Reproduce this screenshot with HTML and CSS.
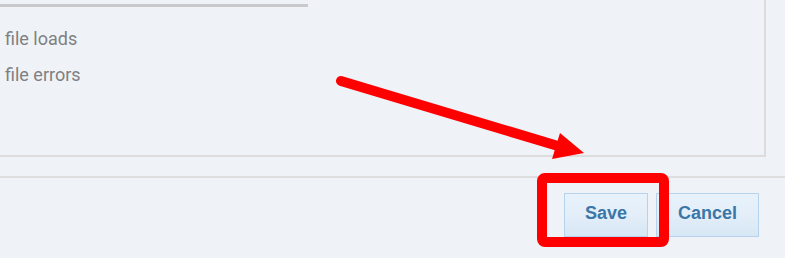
FILE: index.html
```html
<!DOCTYPE html>
<html>
<head>
<meta charset="utf-8">
<link rel="stylesheet" href="styles.css">
</head>
<body>
<div class="page">
  <div class="panel">
    <div class="tab-bar"></div>
    <ul class="items">
      <li>file loads</li>
      <li>file errors</li>
    </ul>
  </div>
  <div class="footer">
    <button class="btn">Save</button>
    <button class="btn btn-cancel">Cancel</button>
  </div>
  <svg class="annot" width="785" height="258" viewBox="0 0 785 258">
    <line x1="341" y1="81" x2="558" y2="146" stroke="#ff0000" stroke-width="10" stroke-linecap="round"/>
    <polygon points="560,133 584,153 552,159" fill="#ff0000"/>
    <rect x="542" y="178" width="122" height="64" rx="3" fill="none" stroke="#ff0000" stroke-width="10"/>
  </svg>
</div>
</body>
</html>
```
FILE: styles.css
```css
html, body {
  margin: 0;
  padding: 0;
  background: #eff3f7;
  width: 785px;
  height: 258px;
  overflow: hidden;
}
.page {
  position: relative;
  width: 785px;
  height: 258px;
  font-family: Roboto, "Liberation Sans", sans-serif;
}
.panel {
  box-sizing: border-box;
  width: 766px;
  height: 157px;
  border-right: 2px solid #dcdcdc;
  border-bottom: 2px solid #dcdcdc;
  padding-top: 4px;
}
.tab-bar {
  width: 308px;
  height: 3px;
  background: #c9c9c9;
}
.items {
  list-style: none;
  margin: 14px 0 0 0;
  padding: 0 0 0 5px;
}
.items li {
  font-size: 18px;
  line-height: 36px;
  color: #808080;
}
.footer {
  margin-top: 19px;
  border-top: 2px solid #dedede;
  padding: 15px 26px 0 0;
  display: flex;
  justify-content: flex-end;
  gap: 8px;
}
.btn {
  box-sizing: border-box;
  width: 84px;
  height: 44px;
  border: 1px solid #b5d3ec;
  background: linear-gradient(#e8f2fb 0%, #e3eef9 50%, #d7e7f5 100%);
  color: #3a77a8;
  font-family: "Liberation Sans", Arial, sans-serif;
  font-weight: bold;
  font-size: 18px;
  padding: 0 0 3px 0;
  margin: 0;
}
.btn-cancel {
  width: 103px;
}
.annot {
  position: absolute;
  left: 0;
  top: 0;
  pointer-events: none;
}
```
